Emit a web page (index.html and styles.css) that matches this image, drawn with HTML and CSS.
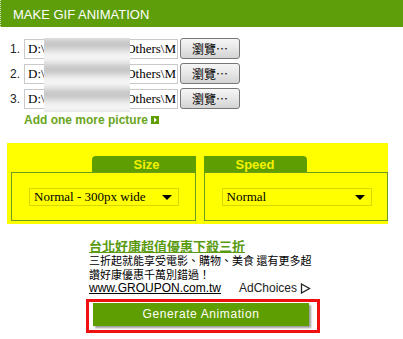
FILE: index.html
```html
<!DOCTYPE html>
<html>
<head>
<meta charset="utf-8">
<link rel="stylesheet" href="styles.css">
</head>
<body>
<div class="page">
  <div class="header">MAKE GIF ANIMATION</div>

  <div class="files">
    <div class="row">
      <span class="num">1.</span>
      <div class="path"><span>D:\</span><span class="tail">Others\M</span></div>
      <button class="browse">瀏覽…</button>
    </div>
    <div class="row">
      <span class="num">2.</span>
      <div class="path"><span>D:\</span><span class="tail">Others\M</span></div>
      <button class="browse">瀏覽…</button>
    </div>
    <div class="row">
      <span class="num">3.</span>
      <div class="path"><span>D:\</span><span class="tail">Others\M</span></div>
      <button class="browse">瀏覽…</button>
    </div>
    <div class="blur"><div class="blur-inner"></div></div>
    <div class="add">Add one more picture <span class="add-icon"><svg width="8" height="8" viewBox="0 0 8 8"><rect width="8" height="8" fill="#5f9e00"/><path d="M3 1.5 L6 4 L3 6.5 Z" fill="#fff"/></svg></span></div>
  </div>

  <div class="options">
    <div class="panel panel-size">
      <div class="tab tab-right">Size</div>
      <div class="box">
        <div class="select"><span>Normal - 300px wide</span><span class="arrow"></span></div>
      </div>
    </div>
    <div class="panel panel-speed">
      <div class="tab tab-left">Speed</div>
      <div class="box">
        <div class="select"><span>Normal</span><span class="arrow"></span></div>
      </div>
    </div>
  </div>

  <div class="ad">
    <div class="ad-title">台北好康超值優惠下殺三折</div>
    <div class="ad-line">三折起就能享受電影、購物、美食 還有更多超</div>
    <div class="ad-line">讚好康優惠千萬別錯過！</div>
    <div class="ad-foot">
      <span class="ad-url">www.GROUPON.com.tw</span>
      <span class="adchoices">AdChoices <svg width="11" height="11" viewBox="0 0 11 11"><path d="M1.5 1 L9.5 5.5 L1.5 10 Z" fill="none" stroke="#222" stroke-width="1.3"/></svg></span>
    </div>
  </div>

  <div class="gen-wrap">
    <div class="gen-frame">
      <div class="gen-btn">Generate Animation</div>
    </div>
  </div>
</div>
</body>
</html>
```

FILE: styles.css
```css
html, body {
  margin: 0;
  padding: 0;
  background: #fff;
}
.page {
  width: 403px;
  height: 339px;
  font-family: "Liberation Sans", Arial, sans-serif;
  position: relative;
  overflow: hidden;
}
.header {
  height: 27px;
  background: #5e9e0a;
  color: #fff;
  font-size: 13px;
  line-height: 29px;
  padding-left: 12px;
  border-left: 1px dotted #d8e8c0;
  box-sizing: border-box;
}
.files {
  position: relative;
  height: 98px;
  padding-top: 11px;
  padding-left: 10px;
  box-sizing: border-box;
}
.row {
  display: flex;
  align-items: center;
  height: 21px;
  margin-bottom: 4px;
}
.num {
  width: 14px;
  font-size: 12px;
  color: #222;
}
.path {
  width: 154px;
  height: 20px;
  box-sizing: border-box;
  border: 1px solid #c9c9c9;
  background: #fff;
  display: flex;
  justify-content: space-between;
  align-items: center;
  padding: 0 1px 0 3px;
  overflow: hidden;
  font-family: "Liberation Serif", "Times New Roman", serif;
  font-size: 13px;
  color: #000;
  white-space: nowrap;
}
.browse {
  margin-left: 2px;
  width: 60px;
  height: 21px;
  box-sizing: border-box;
  border: 1px solid #777;
  border-radius: 3px;
  background: linear-gradient(#f6f6f6, #e6e6e6 50%, #d4d4d4);
  font-family: "Noto Sans CJK TC", sans-serif;
  font-size: 12px;
  line-height: 18px;
  padding: 0;
  color: #000;
}
.blur {
  position: absolute;
  left: 44px;
  top: 11px;
  width: 86px;
  height: 74px;
  overflow: hidden;
  background: #e8e8e8;
}
.blur-inner {
  position: absolute;
  left: -10px;
  top: -10px;
  right: -10px;
  bottom: -10px;
  background: repeating-linear-gradient(180deg, #fafafa 0px, #d0d0d0 7px, #b4b4b4 10px, #d8d8d8 15px, #f6f6f6 20px, #fafafa 25px);
  background-position: 0 6px;
  filter: blur(3px);
}
.add {
  margin-top: 1px;
  margin-left: 14px;
  font-size: 12px;
  font-weight: bold;
  color: #6aa520;
  display: flex;
  align-items: center;
  gap: 3px;
  height: 14px;
}
.add-icon {
  display: inline-flex;
}
.options {
  margin: 18px 0 0 7px;
  width: 381px;
  height: 81px;
  background: #ffff00;
  box-sizing: border-box;
  padding: 13px 0 0 4px;
  display: flex;
  gap: 8px;
}
.panel {
  width: 186px;
  display: flex;
  flex-direction: column;
}
.tab {
  width: 104px;
  height: 16px;
  background: #5f9e00;
  color: #f2f200;
  font-size: 13px;
  font-weight: bold;
  text-align: center;
  line-height: 17px;
}
.tab-right {
  align-self: flex-end;
  border-top-left-radius: 4px;
  padding-left: 6px;
  box-sizing: border-box;
}
.tab-left {
  align-self: flex-start;
  border-top-right-radius: 4px;
  width: 103px;
}
.box {
  height: 49px;
  box-sizing: border-box;
  border: 1px solid #6a9e1a;
  padding: 15px 0 0 17px;
}
.select {
  width: 150px;
  height: 18px;
  box-sizing: border-box;
  border: 1px solid #d8d800;
  display: flex;
  align-items: center;
  justify-content: space-between;
  padding: 0 6px 0 4px;
  font-family: "Liberation Serif", "Times New Roman", serif;
  font-size: 13px;
  color: #000;
}
.arrow {
  width: 0;
  height: 0;
  border-left: 5px solid transparent;
  border-right: 5px solid transparent;
  border-top: 5px solid #000;
}
.ad {
  margin: 14px 0 0 89px;
  width: 230px;
  font-family: "Noto Sans CJK TC", sans-serif;
}
.ad-title {
  height: 15px;
  font-size: 13px;
  font-weight: bold;
  color: #5a9a10;
  text-decoration: underline;
  line-height: 15px;
  white-space: nowrap;
}
.ad-line {
  height: 14px;
  font-size: 11px;
  line-height: 14px;
  color: #000;
  white-space: nowrap;
}
.ad-foot {
  display: flex;
  justify-content: space-between;
  align-items: center;
  width: 222px;
  height: 15px;
}
.ad-url {
  font-family: "Liberation Sans", Arial, sans-serif;
  font-size: 12px;
  line-height: 15px;
  color: #000;
  text-decoration: underline;
}
.adchoices {
  font-family: "Liberation Sans", Arial, sans-serif;
  font-size: 12px;
  line-height: 15px;
  color: #222;
  display: inline-flex;
  align-items: center;
  gap: 3px;
}
.gen-wrap {
  margin: 3px 0 0 86px;
}
.gen-frame {
  width: 234px;
  height: 34px;
  box-sizing: border-box;
  border: 3px solid #f01010;
  padding: 1px 8px 0 4px;
}
.gen-btn {
  height: 23px;
  background: #5f9e00;
  color: #fff;
  font-size: 12px;
  letter-spacing: 0.6px;
  text-align: center;
  line-height: 23px;
  box-shadow: 2px 2px 2px #9a9a9a;
}
```
